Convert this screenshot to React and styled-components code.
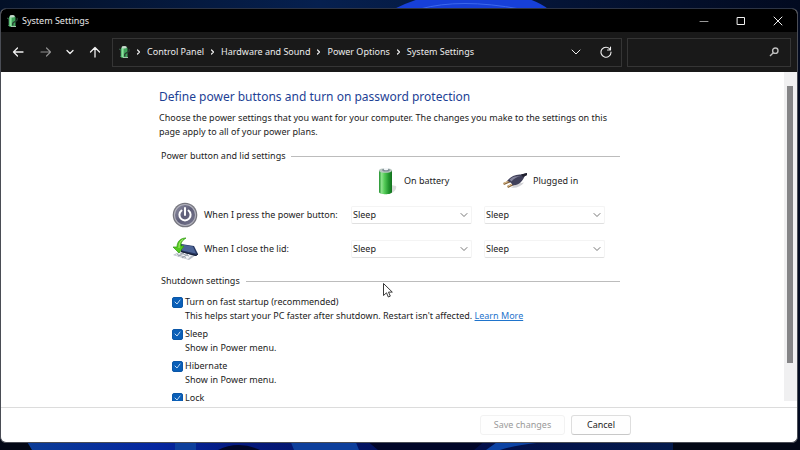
import React, { useState } from "react";
import styled, { createGlobalStyle } from "styled-components";

const GlobalStyle = createGlobalStyle`
  *, *::before, *::after { box-sizing: border-box; }
  body { margin: 0; font: 9px/14px "Noto Sans", "Open Sans", sans-serif; color: #1c1c1c; }
  button, select, input { font: inherit; color: inherit; margin: 0; }
`;

const Desktop = styled.div`
  position: relative;
  height: 100vh;
  min-height: 320px;
  padding: 8px 2px 7px 0;
  overflow: hidden;
  background: #020a20;
`;

const Wallpaper = styled.svg`
  position: absolute;
  inset: 0;
  width: 100%;
  height: 100%;
`;

const Window = styled.main`
  position: relative;
  display: flex;
  flex-direction: column;
  height: 100%;
  overflow: hidden;
  border: 1px solid #4a4d55;
  border-top-color: #2d3444;
  border-radius: 6px;
  background: #fff;
`;

const TitleBar = styled.header`
  display: flex;
  align-items: center;
  flex: none;
  height: 23px;
  padding: 0 1px 0 5px;
  gap: 4px;
  background: #000;
  color: #e8e8e8;
`;

const Title = styled.h1`
  flex: 1;
  margin: 0;
  font-size: 9px;
  font-weight: 400;
`;

const WindowControls = styled.div`
  display: flex;
`;

const IconButton = styled.button`
  display: grid;
  place-items: center;
  flex: none;
  width: ${(p) => p.$width}px;
  height: 22px;
  padding: 0;
  border: 0;
  background: none;
  color: ${(p) => (p.$dim ? "#8f8f8f" : "#f0f0f0")};
`;

const Toolbar = styled.nav`
  display: flex;
  align-items: center;
  flex: none;
  height: 40px;
  padding: 0 6px 0 4px;
  gap: 5px;
  background: #191919;
  color: #ececec;
`;

const NavButtons = styled.div`
  display: flex;
  width: 102px;
`;

const AddressBar = styled.div`
  display: flex;
  align-items: center;
  flex: 1;
  height: 29px;
  padding-left: 5px;
  border: 1px solid #353535;
`;

const Crumbs = styled.ol`
  display: flex;
  flex: 1;
  margin: 0;
  padding: 0;
  list-style: none;
`;

const Crumb = styled.li`
  display: flex;
  align-items: center;
  white-space: nowrap;

  svg { width: 17px; }
`;

const CrumbLink = styled.a`
  color: inherit;
  text-decoration: none;
`;

const SearchBox = styled.label`
  display: flex;
  align-items: center;
  width: 164px;
  height: 29px;
  padding: 0 10px 0 6px;
  border: 1px solid #353535;
  color: #bdbdbd;
`;

const SearchInput = styled.input`
  flex: 1;
  min-width: 0;
  border: 0;
  outline: 0;
  background: none;
`;

const Body = styled.div`
  display: flex;
  flex: 1;
  min-height: 0;
  margin-bottom: 6px;
`;

const Page = styled.div`
  flex: 1;
  min-width: 0;
  overflow: hidden;
  padding: 17px 20px 0 158px;
`;

const Content = styled.div`
  max-width: 461px;
`;

const Heading = styled.h2`
  margin: 0 0 6px;
  font-size: 12px;
  line-height: 16px;
  font-weight: 400;
  color: #1d3f95;
`;

const Intro = styled.p`
  margin: 0 0 10px;
`;

const SectionTitle = styled.h3`
  display: flex;
  align-items: center;
  gap: 6px;
  margin: 0;
  padding-left: 2px;
  font-size: 9px;
  font-weight: 400;

  &::after {
    content: "";
    flex: 1;
    height: 1px;
    background: #bcbcbc;
  }
`;

const SettingsGrid = styled.div`
  display: grid;
  grid-template-columns: 32px 1fr 133px 133px;
  grid-template-rows: 35px 34px 34px;
  align-items: center;
  padding: 0 3px 8px 13px;
`;

const ColumnHead = styled.div`
  display: flex;
  align-items: center;
  gap: 5px;
  padding-left: ${(p) => p.$indent}px;
  grid-column: ${(p) => p.$column};
`;

const SelectBox = styled.div`
  display: grid;
  align-items: center;
  width: 121px;

  > * { grid-area: 1 / 1; }
  > svg { justify-self: end; margin-right: 4px; pointer-events: none; }
`;

const Select = styled.select`
  appearance: none;
  width: 100%;
  height: 18px;
  padding: 0 16px 0 1px;
  border: 1px solid #f4f4f4;
  border-bottom-color: #e0e0e0;
  border-radius: 2px;
  background: #fff;
`;

const OptionList = styled.div`
  display: grid;
  gap: 4px;
  padding: 7px 0 0 13px;
`;

const Option = styled.div`
  display: grid;
  grid-template-columns: 11px 1fr;
  column-gap: 2px;
  align-items: center;
`;

const CheckBox = styled.span`
  display: grid;
  place-items: center;

  > * { grid-area: 1 / 1; }
  > svg { pointer-events: none; }
`;

const CheckInput = styled.input`
  appearance: none;
  width: 11px;
  height: 11px;
  border: 1px solid #0b57a8;
  border-radius: 2px;
  background: #fff;

  &:checked { background: #0a5fb8; }
`;

const Hint = styled.p`
  grid-column: 2;
  margin: 0;
`;

const Link = styled.a`
  color: #1f74cc;
`;

const ScrollTrack = styled.div`
  flex: none;
  width: 13px;
  padding: 14px 4px 0 3px;
  background: #f0f0f1;
`;

const ScrollThumb = styled.div`
  height: 88%;
  background: #858587;
`;

const Footer = styled.footer`
  display: flex;
  justify-content: flex-end;
  flex: none;
  gap: 6px;
  padding: 7px 166px 7px 0;
  border-top: 1px solid #dcdcdc;
`;

const ActionButton = styled.button`
  width: ${(p) => p.$width}px;
  height: 20px;
  padding: 0;
  border: 1px solid #dedede;
  border-bottom-color: #c8c8c8;
  border-radius: 3px;
  background: #fefefe;

  &:disabled {
    border-color: #f2f2f2;
    color: #9a9a9a;
  }
`;

const Pointer = styled.svg`
  position: absolute;
  left: 382px;
  top: 282px;
  pointer-events: none;
`;

const Stroke = ({ d, w = 12, h = 12, sw = 1, ...rest }) => (
  <svg width={w} height={h} viewBox={`0 0 ${w} ${h}`} fill="none" stroke="currentColor" strokeWidth={sw} strokeLinecap="round" strokeLinejoin="round" aria-hidden="true" {...rest}>
    <path d={d} />
  </svg>
);

const ChevronDown = (props) => <Stroke w={10} h={8} d="M1 2l4 4 4-4" {...props} />;

const PowerPlanIcon = () => (
  <svg width="12" height="14" viewBox="0 0 12 14" aria-hidden="true">
    <path d="M1 4l2 1v6l-1 1" fill="none" stroke="#3d6b52" />
    <rect x="3" y="2" width="6.5" height="11" rx="1.6" fill="#3fa35a" />
    <rect x="3.6" y="3" width="2" height="9" fill="#8be09d" />
    <ellipse cx="6.2" cy="2.2" rx="2.6" ry="1.3" fill="#c9dccf" />
    <path d="M11 4c.8 2-.5 3-2 3.600S6 9 7 11.500" fill="none" stroke="#263c31" strokeWidth="1.300" />
    <path d="M5 12.500h5" stroke="#a5c4ad" />
  </svg>
);

const BatteryIcon = () => (
  <svg width="26" height="28" viewBox="0 0 26 28" aria-hidden="true">
    <defs>
      <linearGradient id="cell" x1="0" x2="1">
        <stop offset="0" stopColor="#1f8f2c" />
        <stop offset=".2" stopColor="#8fe48e" />
        <stop offset=".42" stopColor="#55cb58" />
        <stop offset=".75" stopColor="#22962e" />
        <stop offset="1" stopColor="#12701d" />
      </linearGradient>
    </defs>
    <path d="M18 18l5 1c1 2-1 6-5 7z" fill="#cfcfcf" opacity=".7" />
    <path d="M6 3v22c0 3 13 3 13 0V3z" fill="url(#cell)" />
    <ellipse cx="12.500" cy="3.500" rx="6.500" ry="2.300" fill="#b9c7c0" />
    <ellipse cx="13" cy="3" rx="3.800" ry="1.500" fill="#7e8a94" />
    <ellipse cx="13" cy="2" rx="2.400" ry="1.200" fill="#f3f6f8" />
  </svg>
);

const PlugIcon = () => (
  <svg width="26" height="18" viewBox="0 0 26 18" aria-hidden="true">
    <path d="M9 15.500c5 1 10-1 13-5l-6 1z" fill="#d2d2d6" />
    <path d="M1.500 12l7-3M5.500 15l6-3" stroke="#87653c" strokeWidth="2.400" />
    <path d="M1.500 11.500l7-3M5.500 14.500l6-3" stroke="#e6c896" strokeWidth="1" />
    <path d="M5 9c3-4 8-7 14-6.500l6-1.500v2l-2.500 1.500c-2 5-6 9-12 9C10 11 8 9.500 5 9z" fill="#40405a" />
    <path d="M7.500 7.500c3-3 7-4 11-3-3 0-7 2-9 5z" fill="#85859d" />
    <path d="M19 2.500l6-1.500v2l-4 2z" fill="#20202e" />
  </svg>
);

const PowerButtonIcon = () => (
  <svg width="26" height="26" viewBox="0 0 26 26" aria-hidden="true">
    <defs>
      <linearGradient id="face" x1="0" y1="0" x2="1" y2="1">
        <stop offset="0" stopColor="#8f8fa3" />
        <stop offset=".5" stopColor="#5e5e78" />
        <stop offset="1" stopColor="#77778d" />
      </linearGradient>
    </defs>
    <circle cx="13" cy="13" r="12.300" fill="#77777f" />
    <circle cx="13" cy="13" r="11" fill="#b4b4bf" />
    <circle cx="13" cy="13" r="10" fill="url(#face)" />
    <path d="M9.500 8.500a5.600 5.600 0 1 0 7 0M13 6v7" fill="none" stroke="#fff" strokeWidth="2" strokeLinecap="round" />
  </svg>
);

const LidIcon = () => (
  <svg width="26" height="24" viewBox="0 0 26 24" aria-hidden="true">
    <path d="M1 18l8-4 15 4-7 5z" fill="#b9bfc8" />
    <path d="M3 18l6-3 11 3-4 4z" fill="#f2f4f7" />
    <path d="M5 17.500l9 3M8 16l9 3M12 16l-6 3M16 17l-6 4" stroke="#8b93a0" strokeWidth=".8" />
    <path d="M9 7l13 2 4 8-2 2-15-4z" fill="#26365f" />
    <path d="M10 7.500l11 2 3 7-14-3z" fill="#4c6497" />
    <path d="M9 14.500l15 4 2-1.500" fill="none" stroke="#151d33" />
    <path d="M14 1C8 1 5 5 5 10H1l6 6 5-7H9c0-4 1-5 5-8z" fill="#55c922" stroke="#2e9612" strokeWidth=".7" />
    <path d="M11 2.500C8 4 7 7 7 11" fill="none" stroke="#a8f06d" />
  </svg>
);

const CRUMBS = ["Control Panel", "Hardware and Sound", "Power Options", "System Settings"];
const ACTIONS = ["Sleep", "Do nothing", "Hibernate", "Shut down"];
const TRIGGERS = [
  { label: "When I press the power button:", Icon: PowerButtonIcon },
  { label: "When I close the lid:", Icon: LidIcon },
];
const OPTIONS = [
  {
    id: "fast-startup",
    label: "Turn on fast startup (recommended)",
    hint: "This helps start your PC faster after shutdown. Restart isn't affected.",
    link: "Learn More",
  },
  { id: "sleep", label: "Sleep", hint: "Show in Power menu." },
  { id: "hibernate", label: "Hibernate", hint: "Show in Power menu." },
  { id: "lock", label: "Lock" },
];

function ActionSelect({ label }) {
  return (
    <SelectBox>
      <Select aria-label={label} defaultValue="Sleep">
        {ACTIONS.map((a) => <option key={a}>{a}</option>)}
      </Select>
      <Stroke w={8} h={6} d="M1 1.500l3 3 3-3" sw={0.9} color="#666" />
    </SelectBox>
  );
}

function ShutdownOption({ id, label, hint, link }) {
  const [on, setOn] = useState(true);
  return (
    <Option>
      <CheckBox>
        <CheckInput id={id} type="checkbox" checked={on} onChange={() => setOn(!on)} />
        {on && <Stroke w={7} h={6} d="M1 3l2 2 3-4" sw={0.9} color="#d5e8fa" />}
      </CheckBox>
      <label htmlFor={id}>{label}</label>
      {hint && (
        <Hint>
          {hint} {link && <Link href="#learn-more">{link}</Link>}
        </Hint>
      )}
    </Option>
  );
}

export default function App() {
  return (
    <Desktop>
      <GlobalStyle />
      <Wallpaper viewBox="0 0 800 450" preserveAspectRatio="none" aria-hidden="true">
        <defs>
          <linearGradient id="sky" x1="0" x2="1">
            <stop offset="0" stopColor="#031027" />
            <stop offset=".4" stopColor="#06204f" />
            <stop offset=".7" stopColor="#041436" />
            <stop offset="1" stopColor="#020a20" />
          </linearGradient>
          <linearGradient id="petals" x1="0" x2="1">
            <stop offset="0" stopColor="#0b3c96" />
            <stop offset=".2" stopColor="#0526a0" />
            <stop offset=".35" stopColor="#04187a" />
            <stop offset=".7" stopColor="#020f4a" />
            <stop offset="1" stopColor="#041a4c" />
          </linearGradient>
        </defs>
        <rect width="800" height="225" fill="url(#sky)" />
        <path d="M394 9Q412 0 430-4H520Q540 2 548 9z" fill="#1740d8" />
        <path d="M420 9Q460-2 520 9" fill="none" stroke="#3c68ee" />
        <rect y="440" width="800" height="10" fill="#030816" />
        <path d="M26 440h647v10H32z" fill="url(#petals)" />
        <path d="M175 440h21v10h-21zM290 440h65l4 10h-65z" fill="#0d3f9c" />
        <path d="M218 450q20-10 42 0zM366 440h120l-12 10h-96z" fill="#010628" />
        <path d="M500 450q25-8 80-10h-80l-14 10z" fill="#0c43a4" />
      </Wallpaper>

      <Window>
        <TitleBar>
          <PowerPlanIcon />
          <Title>System Settings</Title>
          <WindowControls>
            <IconButton $width={37} aria-label="Minimize"><Stroke w={10} h={10} d="M1 5.500h8" color="#999" /></IconButton>
            <IconButton $width={37} aria-label="Maximize"><Stroke w={10} h={10} d="M1.500 1.500h7v7h-7z" /></IconButton>
            <IconButton $width={37} aria-label="Close"><Stroke w={10} h={10} d="M1 1l8 8M9 1l-8 8" /></IconButton>
          </WindowControls>
        </TitleBar>

        <Toolbar aria-label="Navigation">
          <NavButtons>
            <IconButton $width={26} aria-label="Back"><Stroke d="M11 6H1.500M5.500 2l-4 4 4 4" sw={1.3} /></IconButton>
            <IconButton $width={29} $dim aria-label="Forward"><Stroke d="M1 6h9.500M6.500 2l4 4-4 4" sw={1.2} /></IconButton>
            <IconButton $width={20} aria-label="Recent locations"><Stroke w={8} h={8} d="M1 2.500l3 3 3-3" sw={1.3} /></IconButton>
            <IconButton $width={29} aria-label="Up"><Stroke d="M6 11V1.500M1.500 6L6 1.500 10.500 6" sw={1.3} /></IconButton>
          </NavButtons>
          <AddressBar>
            <PowerPlanIcon />
            <Crumbs>
              {CRUMBS.map((c) => (
                <Crumb key={c}>
                  <Stroke w={6} h={8} d="M2 2l2 2-2 2" sw={1.2} />
                  <CrumbLink href="#crumb">{c}</CrumbLink>
                </Crumb>
              ))}
            </Crumbs>
            <IconButton $width={30} aria-label="Previous locations"><ChevronDown /></IconButton>
            <IconButton $width={30} aria-label="Refresh"><Stroke d="M10.200 3.500A5 5 0 1 0 11 6M10.500 1v3h-3" sw={1.1} /></IconButton>
          </AddressBar>
          <SearchBox>
            <SearchInput type="search" aria-label="Search Control Panel" />
            <svg width="12" height="12" viewBox="0 0 12 12" fill="none" stroke="currentColor" strokeWidth="1.400" aria-hidden="true">
              <circle cx="7.300" cy="4.700" r="2.700" />
              <path d="M5.300 6.700L2 10" />
            </svg>
          </SearchBox>
        </Toolbar>

        <Body>
          <Page>
            <Content>
              <Heading>Define power buttons and turn on password protection</Heading>
              <Intro>
                Choose the power settings that you want for your computer. The changes you make to the settings on this
                page apply to all of your power plans.
              </Intro>

              <SectionTitle>Power button and lid settings</SectionTitle>
              <SettingsGrid>
                <ColumnHead $column={3} $indent={22}><BatteryIcon />On battery</ColumnHead>
                <ColumnHead $column={4} $indent={18}><PlugIcon />Plugged in</ColumnHead>
                {TRIGGERS.map(({ label, Icon }) => (
                  <React.Fragment key={label}>
                    <Icon />
                    <span>{label}</span>
                    <ActionSelect label={`${label} On battery`} />
                    <ActionSelect label={`${label} Plugged in`} />
                  </React.Fragment>
                ))}
              </SettingsGrid>

              <SectionTitle>Shutdown settings</SectionTitle>
              <OptionList>
                {OPTIONS.map((o) => <ShutdownOption key={o.id} {...o} />)}
              </OptionList>
            </Content>
          </Page>
          <ScrollTrack><ScrollThumb /></ScrollTrack>
        </Body>

        <Footer>
          <ActionButton $width={85} disabled>Save changes</ActionButton>
          <ActionButton $width={60}>Cancel</ActionButton>
        </Footer>
      </Window>

      <Pointer width="12" height="17" viewBox="0 0 12 17" aria-hidden="true">
        <path d="M1.500 1.500v12l3-2.700 1.800 4.200 2-.9-1.800-4h3.800z" fill="#fff" stroke="#222" strokeWidth=".9" />
      </Pointer>
    </Desktop>
  );
}
